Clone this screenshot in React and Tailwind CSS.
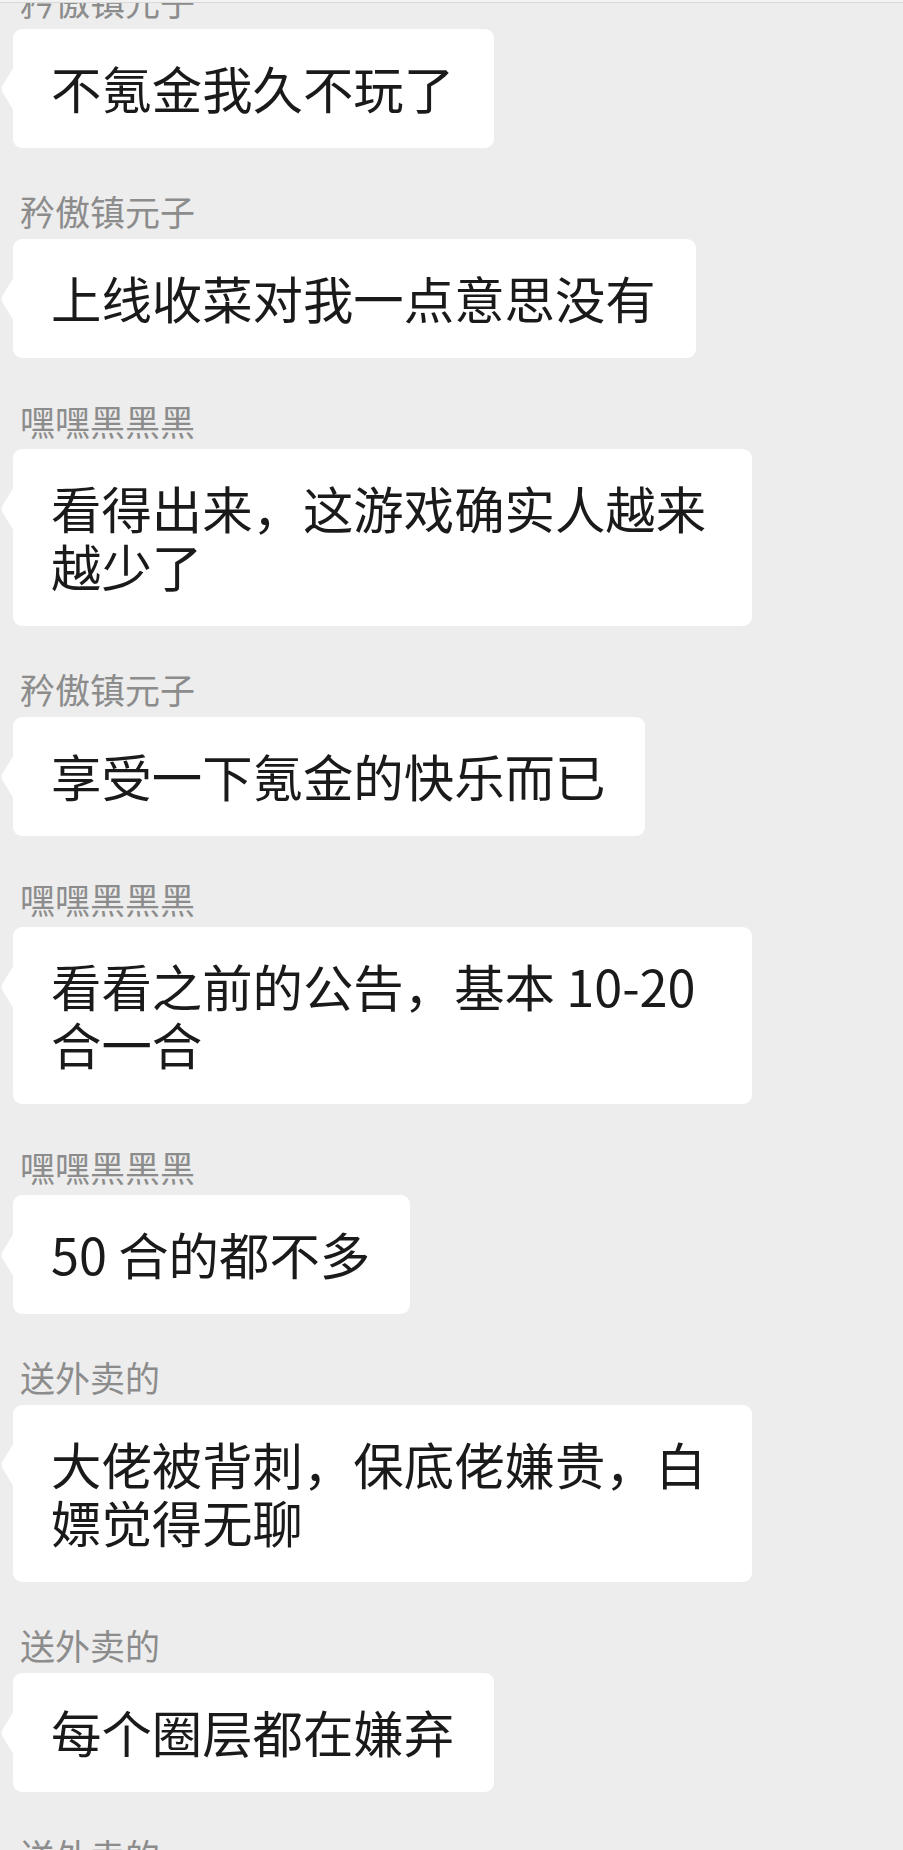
import React from 'react';

const messages = [
  { name: '矜傲镇元子', text: '不氪金我久不玩了' },
  { name: '矜傲镇元子', text: '上线收菜对我一点意思没有' },
  { name: '嘿嘿黑黑黑', text: '看得出来，这游戏确实人越来越少了' },
  { name: '矜傲镇元子', text: '享受一下氪金的快乐而已' },
  { name: '嘿嘿黑黑黑', text: '看看之前的公告，基本 10-20 合一合' },
  { name: '嘿嘿黑黑黑', text: '50 合的都不多' },
  { name: '送外卖的', text: '大佬被背刺，保底佬嫌贵，白嫖觉得无聊' },
  { name: '送外卖的', text: '每个圈层都在嫌弃' },
  { name: '送外卖的', text: '' },
];

function Bubble({ text }) {
  return (
    <div className="relative ml-[13px] w-fit max-w-[739px] rounded-[9px] bg-white pl-[38px] pr-[40px] pt-[30px] pb-[31px] text-[50.4px] leading-[58px] text-[#1a1a1a]">
      <svg
        className="absolute left-[-13px] top-[38px]"
        width="14"
        height="44"
        viewBox="0 0 14 44"
      >
        <path d="M14 0 L2.5 18.5 Q0.8 22 2.5 25.5 L14 44 Z" fill="#ffffff" />
      </svg>
      {text}
    </div>
  );
}

export default function App() {
  return (
    <div
      className="relative h-[1850px] w-[903px] overflow-hidden bg-[#ededed]"
      style={{ fontFamily: '"Noto Sans CJK SC", "Noto Sans", sans-serif' }}
    >
      <div className="mt-[-22px] flex flex-col gap-[40px]">
        {messages.map((m, i) => (
          <div key={i} className="flex flex-col gap-[6px]">
            <div className="pl-[20px] text-[35px] leading-[45px] text-[#8c8c8c]">{m.name}</div>
            {m.text && <Bubble text={m.text} />}
          </div>
        ))}
      </div>

      {/* top edge of the chat view */}
      <div className="absolute left-0 right-0 top-0 h-[3px] border-b border-[#d9d9d9] bg-[#f2f2f2]" />
    </div>
  );
}
